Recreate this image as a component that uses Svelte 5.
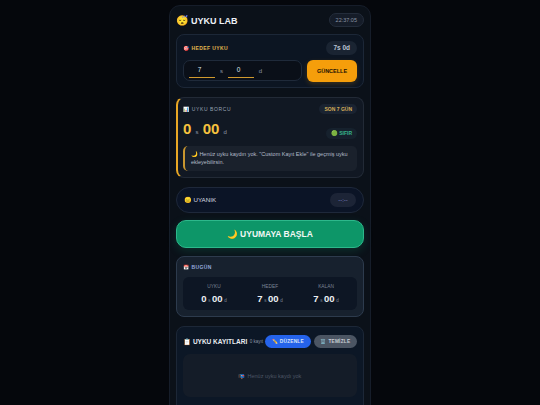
<script>
  let target = { h: 7, m: 0 };
  let stats = [
    { label: "UYKU", h: 0, m: "00" },
    { label: "HEDEF", h: 7, m: "00" },
    { label: "KALAN", h: 7, m: "00" },
  ];
</script>

<div class="page">
  <main class="phone">
    <header class="top">
      <h1><span class="emoji">😴</span> UYKU LAB</h1>
      <div class="clock">22:37:05</div>
    </header>

    <section class="card goal">
      <div class="row">
        <div class="label gold"><span class="emoji">🎯</span> HEDEF UYKU</div>
        <div class="pill">7s 0d</div>
      </div>
      <div class="goal-row">
        <div class="inputs">
          <span class="num">{target.h}</span><span class="unit">s</span>
          <span class="num">{target.m}</span><span class="unit">d</span>
        </div>
        <button class="update">GÜNCELLE</button>
      </div>
    </section>

    <section class="card debt">
      <div class="row">
        <div class="label muted"><span class="emoji">📊</span> UYKU BORCU</div>
        <div class="tag">SON 7 GÜN</div>
      </div>
      <div class="row debt-row">
        <div class="big">0 <small>s</small> 00 <small>d</small></div>
        <div class="zero"><span class="emoji">🟢</span> SIFIR</div>
      </div>
      <p class="note"><span class="emoji">🌙</span> Henüz uyku kaydın yok. "Custom Kayıt Ekle" ile geçmiş uyku ekleyebilirsin.</p>
    </section>

    <section class="status">
      <div class="state"><span class="emoji">😑</span> UYANIK</div>
      <div class="timer">--:--</div>
    </section>

    <button class="sleep"><span class="emoji">🌙</span> UYUMAYA BAŞLA</button>

    <section class="card today">
      <div class="label blue"><span class="emoji">📅</span> BUGÜN</div>
      <div class="stats">
        {#each stats as s}
          <div class="stat">
            <div class="stat-label">{s.label}</div>
            <div class="stat-val">{s.h} <small>s</small> {s.m} <small>d</small></div>
          </div>
        {/each}
      </div>
    </section>

    <section class="card logs">
      <div class="row">
        <div class="logs-title"><span class="emoji">📋</span> UYKU KAYITLARI</div>
        <div class="count">0 kayıt</div>
        <button class="edit"><span class="emoji">✏️</span> DÜZENLE</button>
        <button class="clear"><span class="emoji">🗑️</span> TEMİZLE</button>
      </div>
      <div class="empty"><span class="emoji">📭</span> Henüz uyku kaydı yok</div>
    </section>
  </main>
</div>

<style>
  :global(body) {
    margin: 0;
    background: #05070c;
    font-family: "Liberation Sans", Arial, sans-serif;
  }
  .page {
    height: 405px;
    overflow: hidden;
    display: flex;
    justify-content: center;
    padding-top: 5px;
    box-sizing: border-box;
  }
  .phone {
    width: 202px;
    height: 420px;
    box-sizing: border-box;
    padding: 7px 6px;
    background: #0b1119;
    border: 1px solid #161d2a;
    border-radius: 11px;
    flex-shrink: 0;
  }
  .top {
    display: flex;
    align-items: center;
    justify-content: space-between;
    height: 14px;
    margin-bottom: 7px;
  }
  h1 {
    margin: 0;
    font-size: 9px;
    font-weight: 700;
    color: #eef2f7;
  }
  h1 .emoji {
    font-size: 10px;
  }
  .clock {
    font-size: 5.5px;
    line-height: 8px;
    color: #8b95a5;
    background: #151c28;
    border: 1px solid #232c3a;
    border-radius: 7px;
    padding: 2px 6px;
    margin-right: 0;
  }
  .emoji {
    font-family: "Noto Color Emoji", sans-serif;
  }
  .card {
    box-sizing: border-box;
    border-radius: 8px;
    padding: 6px;
    border: 1px solid #1c2737;
    background: #0c1522;
  }
  .row {
    display: flex;
    align-items: center;
    justify-content: space-between;
  }
  .label {
    font-size: 5px;
    font-weight: 700;
    letter-spacing: 0.4px;
  }
  .gold { color: #e0b64e; }
  .muted { color: #97a2b3; font-weight: 400; letter-spacing: 0.6px; }
  .blue { color: #93a8dc; }
  .goal {
    height: 54px;
    margin-bottom: 9px;
  }
  .pill {
    font-size: 6.5px;
    font-weight: 700;
    color: #bcc5d2;
    background: #1a2432;
    border-radius: 7px;
    padding: 3px 7px;
    line-height: 8px;
  }
  .goal-row {
    display: flex;
    gap: 5px;
    margin-top: 5px;
  }
  .inputs {
    flex: 1;
    height: 21px;
    box-sizing: border-box;
    display: flex;
    align-items: center;
    padding: 0 5px;
    background: #0a0f18;
    border: 1px solid #1f2a3a;
    border-radius: 7px;
  }
  .num {
    width: 26px;
    height: 14px;
    line-height: 12px;
    box-sizing: border-box;
    padding-right: 5px;
    text-align: center;
    font-size: 6.5px;
    color: #dfe4ea;
    border-bottom: 1px solid #d19a2e;
  }
  .unit {
    width: 13px;
    text-align: center;
    font-size: 6px;
    color: #8a94a3;
  }
  .update {
    width: 50px;
    height: 22px;
    border: 0;
    padding: 0;
    border-radius: 6px;
    background: #f59e0b;
    color: #1a1204;
    font-family: inherit;
    font-size: 5.5px;
    font-weight: 700;
    box-shadow: 0 2px 5px rgba(245, 158, 11, 0.2);
  }
  .debt {
    height: 81px;
    margin-bottom: 9px;
    background: #111823;
    border-color: #222a36;
    border-left: 2px solid #e9a825;
    padding: 6px 6px 6px 5px;
  }
  .tag {
    font-size: 5px;
    font-weight: 700;
    color: #d5ad58;
    background: #1a2331;
    border-radius: 5px;
    padding: 2px 5px;
    line-height: 6px;
  }
  .debt-row {
    margin-top: 5px;
    height: 22px;
  }
  .big {
    font-size: 15px;
    font-weight: 700;
    color: #f6c23e;
    line-height: 20px;
  }
  .big small {
    font-size: 6px;
    font-weight: 400;
    color: #8b95a5;
  }
  .zero {
    font-size: 5px;
    font-weight: 700;
    color: #38b48b;
    background: #16212d;
    border-radius: 6px;
    padding: 2px 5px;
    line-height: 7px;
    margin-top: 6px;
  }
  .zero .emoji {
    font-size: 5.5px;
  }
  .note {
    margin: 5px 0 0;
    height: 25px;
    box-sizing: border-box;
    padding: 4px 6px 0;
    font-size: 5.5px;
    line-height: 8px;
    color: #b3bcc9;
    background: #1a212c;
    border-left: 2px solid #c9962f;
    border-radius: 5px;
  }
  .status {
    height: 26px;
    box-sizing: border-box;
    display: flex;
    align-items: center;
    justify-content: space-between;
    padding: 0 7px;
    margin-bottom: 7px;
    background: #0b1426;
    border: 1px solid #1e283a;
    border-radius: 13px;
  }
  .state {
    font-size: 6.2px;
    color: #d7dce4;
  }
  .timer {
    width: 26px;
    text-align: center;
    font-size: 6px;
    line-height: 14px;
    color: #8289d6;
    background: #1c2436;
    border-radius: 7px;
  }
  .sleep {
    display: block;
    width: 100%;
    height: 28px;
    margin-bottom: 8px;
    padding: 0;
    font-family: inherit;
    font-size: 8.5px;
    font-weight: 700;
    color: #f1f7f4;
    background: #0d9668;
    border: 1px solid #2db88b;
    border-radius: 10px;
    box-shadow: 0 3px 10px rgba(16, 185, 129, 0.18);
  }
  .today {
    height: 61px;
    margin-bottom: 9px;
    background: #17212e;
    border-color: #2d3b4d;
    padding-top: 7px;
  }
  .stats {
    display: grid;
    grid-template-columns: repeat(3, 1fr);
    height: 33px;
    margin-top: 7px;
    padding: 6px 3px 0;
    box-sizing: border-box;
    background: #0d1624;
    border-radius: 6px;
  }
  .stat {
    text-align: center;
  }
  .stat-label {
    font-size: 4.8px;
    line-height: 7px;
    color: #7b8595;
  }
  .stat-val {
    margin-top: 3px;
    font-size: 9.5px;
    font-weight: 700;
    word-spacing: -1px;
    color: #eceff3;
    line-height: 11px;
  }
  .stat-val small {
    font-size: 4.5px;
    font-weight: 400;
    color: #7b8595;
  }
  .logs {
    height: 90px;
    padding-top: 5px;
    background: #0c1726;
  }
  .logs .row {
    height: 13px;
    margin-top: 3px;
    justify-content: flex-start;
  }
  .logs-title {
    font-size: 6.5px;
    font-weight: 700;
    color: #e8ecf1;
    white-space: nowrap;
  }
  .count {
    font-size: 4.5px;
    color: #8b95a5;
    margin-left: 2.5px;
    white-space: nowrap;
  }
  .edit, .clear {
    height: 13px;
    padding: 0;
    border: 0;
    border-radius: 7px;
    font-family: inherit;
    font-size: 4.8px;
    font-weight: 700;
    letter-spacing: 0.2px;
    color: #d8e3f8;
    white-space: nowrap;
  }
  .edit {
    width: 46px;
    margin-left: auto;
    background: #2563eb;
  }
  .clear {
    width: 43px;
    margin-left: 3px;
    background: #4b5563;
    color: #c7ccd4;
  }
  .empty {
    height: 43px;
    margin-top: 6px;
    display: flex;
    align-items: center;
    justify-content: center;
    gap: 2px;
    font-size: 5.5px;
    color: #4d5665;
    background: #141c28;
    border-radius: 7px;
  }
</style>
